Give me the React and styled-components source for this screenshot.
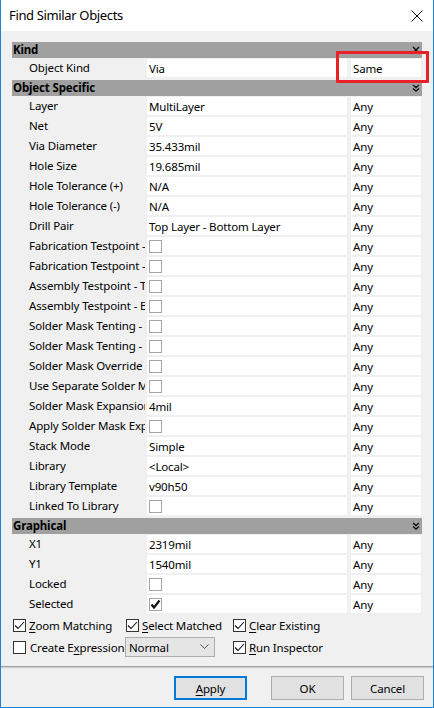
import React from 'react';
import styled, { createGlobalStyle } from 'styled-components';

const Global = createGlobalStyle`
  html, body { margin: 0; padding: 0; background: #ffffff; }
  body {
    font-family: "Noto Sans", "Liberation Sans", sans-serif;
    font-size: 11.5px;
    letter-spacing: -0.15px;
    color: #000;
  }
  * { box-sizing: border-box; }
`;

const Window = styled.div`
  position: relative;
  width: 434px;
  height: 708px;
  border: 1px solid #1883d7;
  border-top: none;
  background: #f0f0f0;
  display: flex;
  flex-direction: column;
`;

const TitleBar = styled.div`
  height: 31px;
  flex: none;
  background: #ffffff;
  display: flex;
  align-items: center;
  justify-content: space-between;
  padding: 0 9px 0 8px;
`;

const Title = styled.div`
  font-size: 13px;
  letter-spacing: -0.35px;
  padding-bottom: 1px;
`;

const CloseButton = styled.div`
  width: 14px;
  height: 14px;
  display: flex;
  align-items: center;
  justify-content: center;
`;

const Body = styled.div`
  flex: 1;
  padding: 11px 11px 0 11px;
  display: flex;
  flex-direction: column;
`;

const Section = styled.div`
  margin-bottom: 2px;
`;

const SectionHeader = styled.div`
  height: 16px;
  background: #a0a0a0;
  font-weight: bold;
  padding-left: 1px;
  display: flex;
  align-items: center;
  justify-content: space-between;
  padding-right: 2px;
  line-height: 16px;
`;

const Row = styled.div`
  display: grid;
  grid-template-columns: 135px 200px 74px;
  height: 20px;
  align-items: center;
`;

const Label = styled.div`
  padding-left: 17px;
  margin-right: 2px;
  white-space: nowrap;
  overflow: hidden;
  height: 18px;
  line-height: 18px;
`;

const Cell = styled.div`
  height: 18px;
  background: #ffffff;
  padding-left: 2px;
  margin-left: ${p => (p.$spaced ? '4px' : '0')};
  display: flex;
  align-items: center;
  white-space: nowrap;
  overflow: hidden;
`;

const Box = styled.span`
  width: 13px;
  height: 13px;
  flex: none;
  background: #ffffff;
  border: 1px solid ${p => (p.$dark ? '#333333' : '#a6a6a6')};
  display: inline-flex;
  align-items: center;
  justify-content: center;
`;

const Options = styled.div`
  margin-top: -1px;
  display: grid;
  grid-template-columns: 113px 107px auto;
  grid-auto-rows: 20px;
  row-gap: 2px;
  align-items: center;
  padding-left: 1px;
`;

const Option = styled.label`
  display: flex;
  align-items: center;
  gap: 3px;
  white-space: nowrap;
`;

const Select = styled.div`
  width: 90px;
  height: 20px;
  margin-left: -1px;
  background: #e5e5e5;
  border: 1px solid #adadad;
  display: flex;
  align-items: center;
  justify-content: space-between;
  padding: 0 5px 0 3px;
`;

const Footer = styled.div`
  flex: none;
  height: 41px;
  border-top: 1px solid #a0a0a0;
  box-shadow: inset 0 1px 0 #d2d2d2, inset 0 2px 0 #e4e4e4;
  display: flex;
  justify-content: flex-end;
  align-items: flex-start;
  padding: 9px 9px 0 0;
  gap: 7px;
`;

const Button = styled.div`
  width: 73px;
  height: 24px;
  background: #e1e1e1;
  border: ${p => (p.$default ? '2px solid #0078d7' : '1px solid #adadad')};
  display: flex;
  align-items: center;
  justify-content: center;
  margin-right: ${p => (p.$default ? '17px' : '0')};
`;

const Annotation = styled.div`
  position: absolute;
  left: 335px;
  top: 51px;
  width: 93px;
  height: 32px;
  border: 3px solid #e8202a;
  border-radius: 1px;
  pointer-events: none;
`;

const Check = ({ bold }) => (
  <svg width="11" height="11" viewBox="0 0 11 11">
    <path
      d={bold ? 'M1.5 5.5 L4 8.5 L9.5 1.5' : 'M1 5.5 L4 8.5 L10 2'}
      fill="none"
      stroke="#111"
      strokeWidth={bold ? 2.2 : 1.1}
    />
  </svg>
);

const CheckBox = ({ checked, dark, bold }) => (
  <Box $dark={dark}>{checked && <Check bold={bold} />}</Box>
);

const ChevronDouble = ({ up }) => (
  <svg width="8" height="8" viewBox="0 0 8 8">
    {up ? (
      <path d="M1 1 L4 4 L7 1 M1 7 L4 4 L7 7" fill="none" stroke="#111" strokeWidth="1.4" />
    ) : (
      <path d="M1 1 L4 3.5 L7 1 M1 4.5 L4 7 L7 4.5" fill="none" stroke="#111" strokeWidth="1.4" />
    )}
  </svg>
);

const U = styled.span`
  text-decoration: underline;
  text-underline-offset: 2px;
`;

const specRows = [
  ['Layer', 'MultiLayer'],
  ['Net', '5V'],
  ['Via Diameter', '35.433mil'],
  ['Hole Size', '19.685mil'],
  ['Hole Tolerance (+)', 'N/A'],
  ['Hole Tolerance (-)', 'N/A'],
  ['Drill Pair', 'Top Layer - Bottom Layer'],
  ['Fabrication Testpoint - Top', false],
  ['Fabrication Testpoint - Bottom', false],
  ['Assembly Testpoint - Top', false],
  ['Assembly Testpoint - Bottom', false],
  ['Solder Mask Tenting - Top', false],
  ['Solder Mask Tenting - Bottom', false],
  ['Solder Mask Override', false],
  ['Use Separate Solder Mask', false],
  ['Solder Mask Expansion', '4mil'],
  ['Apply Solder Mask Expansion', false],
  ['Stack Mode', 'Simple'],
  ['Library', '<Local>'],
  ['Library Template', 'v90h50'],
  ['Linked To Library', false],
];

const graphRows = [
  ['X1', '2319mil'],
  ['Y1', '1540mil'],
  ['Locked', false],
  ['Selected', true],
];

const PropRow = ({ label, value, match = 'Any' }) => (
  <Row>
    <Label>{label}</Label>
    <Cell>
      {typeof value === 'boolean' ? <CheckBox checked={value} bold /> : value}
    </Cell>
    <Cell $spaced>{match}</Cell>
  </Row>
);

export default function App() {
  return (
    <>
      <Global />
      <Window>
        <TitleBar>
          <Title>Find Similar Objects</Title>
          <CloseButton>
            <svg width="12" height="12" viewBox="0 0 12 12">
              <path d="M0.5 0.5 L11.5 11.5 M11.5 0.5 L0.5 11.5" stroke="#111" strokeWidth="1" />
            </svg>
          </CloseButton>
        </TitleBar>
        <Body>
          <Section>
            <SectionHeader>
              Kind
              <ChevronDouble up />
            </SectionHeader>
            <PropRow label="Object Kind" value="Via" match="Same" />
          </Section>
          <Section>
            <SectionHeader>
              Object Specific
              <ChevronDouble />
            </SectionHeader>
            {specRows.map(([l, v]) => (
              <PropRow key={l} label={l} value={v} />
            ))}
          </Section>
          <Section>
            <SectionHeader>
              Graphical
              <ChevronDouble />
            </SectionHeader>
            {graphRows.map(([l, v]) => (
              <PropRow key={l} label={l} value={v} />
            ))}
          </Section>
          <Options>
            <Option>
              <CheckBox checked dark />
              <span><U>Z</U>oom Matching</span>
            </Option>
            <Option>
              <CheckBox checked dark />
              <span><U>S</U>elect Matched</span>
            </Option>
            <Option>
              <CheckBox checked dark />
              <span><U>C</U>lear Existing</span>
            </Option>
            <Option>
              <CheckBox dark />
              <span style={{ marginLeft: 1 }}>Create E<U>x</U>pression</span>
            </Option>
            <Select>
              <span>Normal</span>
              <svg width="9" height="6" viewBox="0 0 9 6">
                <path d="M0.5 0.5 L4.5 4.5 L8.5 0.5" fill="none" stroke="#555" strokeWidth="1" />
              </svg>
            </Select>
            <Option>
              <CheckBox checked dark />
              <span><U>R</U>un Inspector</span>
            </Option>
          </Options>
        </Body>
        <Footer>
          <Button $default><span><U>A</U>pply</span></Button>
          <Button>OK</Button>
          <Button>Cancel</Button>
        </Footer>
        <Annotation />
      </Window>
    </>
  );
}
